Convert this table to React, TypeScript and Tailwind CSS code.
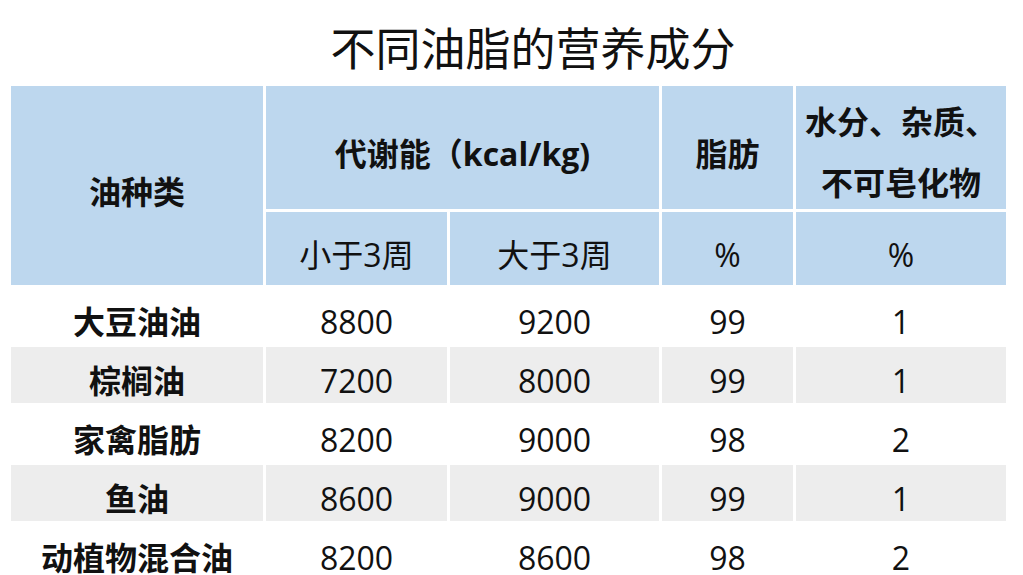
import React from 'react';

const FONT = "font-['Open_Sans','Noto_Sans_CJK_SC',sans-serif]";

const rows = [
  { name: '大豆油油', a: '8800', b: '9200', fat: '99', other: '1' },
  { name: '棕榈油', a: '7200', b: '8000', fat: '99', other: '1' },
  { name: '家禽脂肪', a: '8200', b: '9000', fat: '98', other: '2' },
  { name: '鱼油', a: '8600', b: '9000', fat: '99', other: '1' },
  { name: '动植物混合油', a: '8200', b: '8600', fat: '98', other: '2' },
];

function Cell({ children, className = '' }: { children: React.ReactNode; className?: string }) {
  return (
    <div className={`flex items-center justify-center pt-[12px] text-[32px] leading-none text-[#111] ${className}`}>
      {children}
    </div>
  );
}

export default function App() {
  return (
    <div className={`w-[1023px] h-[575px] overflow-hidden bg-white ${FONT}`}>
      {/* 标题 */}
      <div className="h-[86px] flex items-center justify-center pl-[43px] pt-[10px]">
        <h1 className="text-[45px] leading-none font-normal text-[#111]">不同油脂的营养成分</h1>
      </div>

      <div className="ml-[11px] grid grid-cols-[252px_181px_209px_131px_210px] grid-rows-[123px_73px_repeat(5,56px)] gap-[3px]">
        {/* 表头 */}
        <Cell className="row-span-2 bg-[#bdd7ee] font-bold">油种类</Cell>
        <Cell className="col-span-2 bg-[#bdd7ee] font-bold">代谢能（kcal/kg)</Cell>
        <Cell className="bg-[#bdd7ee] font-bold">脂肪</Cell>
        <div className="bg-[#bdd7ee] flex flex-col items-center justify-center pt-[8px] text-[32px] leading-[61px] font-bold text-[#111]">
          <span>水分、杂质、</span>
          <span>不可皂化物</span>
        </div>
        <Cell className="bg-[#bdd7ee]">小于3周</Cell>
        <Cell className="bg-[#bdd7ee]">大于3周</Cell>
        <Cell className="bg-[#bdd7ee]">%</Cell>
        <Cell className="bg-[#bdd7ee]">%</Cell>

        {/* 数据行 */}
        {rows.map((r, i) => {
          const bg = i % 2 === 1 ? 'bg-[#ededed]' : 'bg-white';
          return (
            <React.Fragment key={r.name}>
              <Cell className={`${bg} font-bold`}>{r.name}</Cell>
              <Cell className={bg}>{r.a}</Cell>
              <Cell className={bg}>{r.b}</Cell>
              <Cell className={bg}>{r.fat}</Cell>
              <Cell className={bg}>{r.other}</Cell>
            </React.Fragment>
          );
        })}
      </div>
    </div>
  );
}
